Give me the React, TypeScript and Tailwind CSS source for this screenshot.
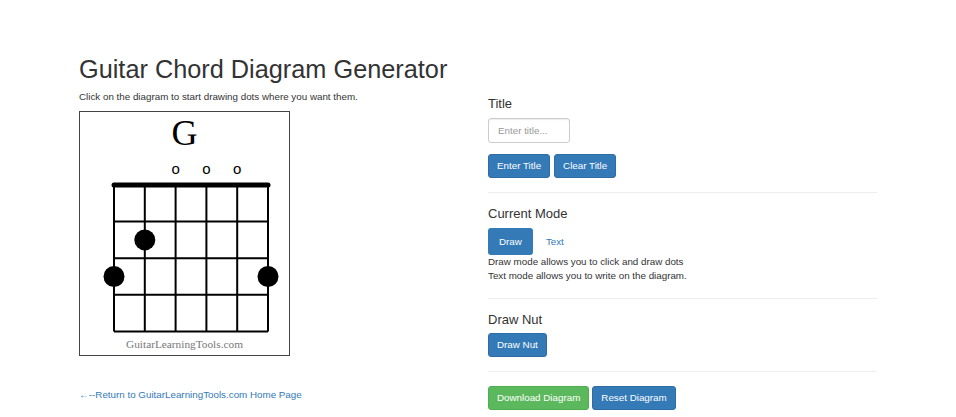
import React from "react";

function Diagram() {
  const strings = [0, 1, 2, 3, 4, 5].map((i) => 34 + 30.8 * i);
  const frets = [0, 1, 2, 3, 4].map((i) => 73 + 36.6 * i);
  return (
    <div className="border border-[#444] w-[211px] h-[245px] bg-white">
      <svg width="209" height="243" viewBox="0 0 209 243">
        <text x="104.5" y="33" textAnchor="middle" fontFamily="'Liberation Serif', serif" fontSize="36" fill="#000">G</text>
        {[2, 3, 4].map((i) => (
          <text key={i} x={strings[i]} y="62" textAnchor="middle" fontFamily="'Liberation Sans', sans-serif" fontSize="15" fill="#000">o</text>
        ))}
        {strings.map((x, i) => (
          <line key={i} x1={x} y1={frets[0]} x2={x} y2={frets[4]} stroke="#000" strokeWidth="2" />
        ))}
        {frets.slice(1).map((y, i) => (
          <line key={i} x1={strings[0]} y1={y} x2={strings[5]} y2={y} stroke="#000" strokeWidth="2" />
        ))}
        <line x1={strings[0]} y1={frets[0]} x2={strings[5]} y2={frets[0]} stroke="#000" strokeWidth="5" strokeLinecap="round" />
        <circle cx={strings[1]} cy={(frets[1] + frets[2]) / 2} r="10.5" fill="#000" />
        <circle cx={strings[0]} cy={(frets[2] + frets[3]) / 2} r="10.5" fill="#000" />
        <circle cx={strings[5]} cy={(frets[2] + frets[3]) / 2} r="10.5" fill="#000" />
        <text x="104.5" y="236" textAnchor="middle" fontFamily="'Liberation Serif', serif" fontSize="11.3" fill="#777">GuitarLearningTools.com</text>
      </svg>
    </div>
  );
}

const btn = "inline-block rounded-[3px] text-white text-[9.8px] leading-[14px] px-[8px] py-[4px] border";
const blue = " bg-[#337ab7] border-[#2e6da4]";

export default function App() {
  return (
    <div className="w-full min-h-[417px] bg-white text-[#333]" style={{ fontFamily: "'Liberation Sans', Arial, sans-serif" }}>
      <div className="mx-auto w-[798px] pt-[55px]">
        <h1 className="text-[25.3px] leading-[29px] font-normal text-[#333] m-0">Guitar Chord Diagram Generator</h1>
        <div className="flex mt-[6px]">
          <div className="w-[409px] shrink-0">
            <p className="text-[9.8px] leading-[14px] m-0">Click on the diagram to start drawing dots where you want them.</p>
            <div className="mt-[7px]">
              <Diagram />
            </div>
            <a className="block mt-[32px] text-[9.8px] leading-[14px] text-[#337ab7]" href="#">←--Return to GuitarLearningTools.com Home Page</a>
          </div>
          <div className="flex-1">
            <h4 className="mt-[7px] text-[13px] leading-[14px] font-normal text-[#333]">Title</h4>
            <input
              className="mt-[7px] block w-[82px] h-[25px] border border-[#ccc] rounded-[3px] px-[9px] text-[9.8px] text-[#555] placeholder:text-[#999] outline-none shadow-[inset_0_1px_1px_rgba(0,0,0,0.075)]"
              placeholder="Enter title..."
            />
            <div className="mt-[11px] flex gap-[4px]">
              <button className={btn + blue}>Enter Title</button>
              <button className={btn + blue}>Clear Title</button>
            </div>
            <hr className="mt-[14px] mb-[14px] border-0 border-t border-[#eee]" />
            <h4 className="text-[13px] leading-[14px] font-normal text-[#333]">Current Mode</h4>
            <div className="mt-[7px] flex gap-[2px]">
              <span className="rounded-[3px] bg-[#337ab7] text-white text-[9.8px] leading-[14px] px-[11px] py-[6.5px]">Draw</span>
              <span className="rounded-[3px] text-[#337ab7] text-[9.8px] leading-[14px] px-[11px] py-[6.5px]">Text</span>
            </div>
            <p className="text-[9.8px] leading-[14px] m-0">Draw mode allows you to click and draw dots</p>
            <p className="text-[9.8px] leading-[14px] m-0">Text mode allows you to write on the diagram.</p>
            <hr className="mt-[15px] mb-[14px] border-0 border-t border-[#eee]" />
            <h4 className="text-[13px] leading-[14px] font-normal text-[#333]">Draw Nut</h4>
            <div className="mt-[4px]">
              <button className={btn + blue}>Draw Nut</button>
            </div>
            <hr className="mt-[14px] mb-[14px] border-0 border-t border-[#eee]" />
            <div className="flex gap-[3px]">
              <button className={btn + " bg-[#5cb85c] border-[#4cae4c]"}>Download Diagram</button>
              <button className={btn + blue}>Reset Diagram</button>
            </div>
          </div>
        </div>
      </div>
    </div>
  );
}
